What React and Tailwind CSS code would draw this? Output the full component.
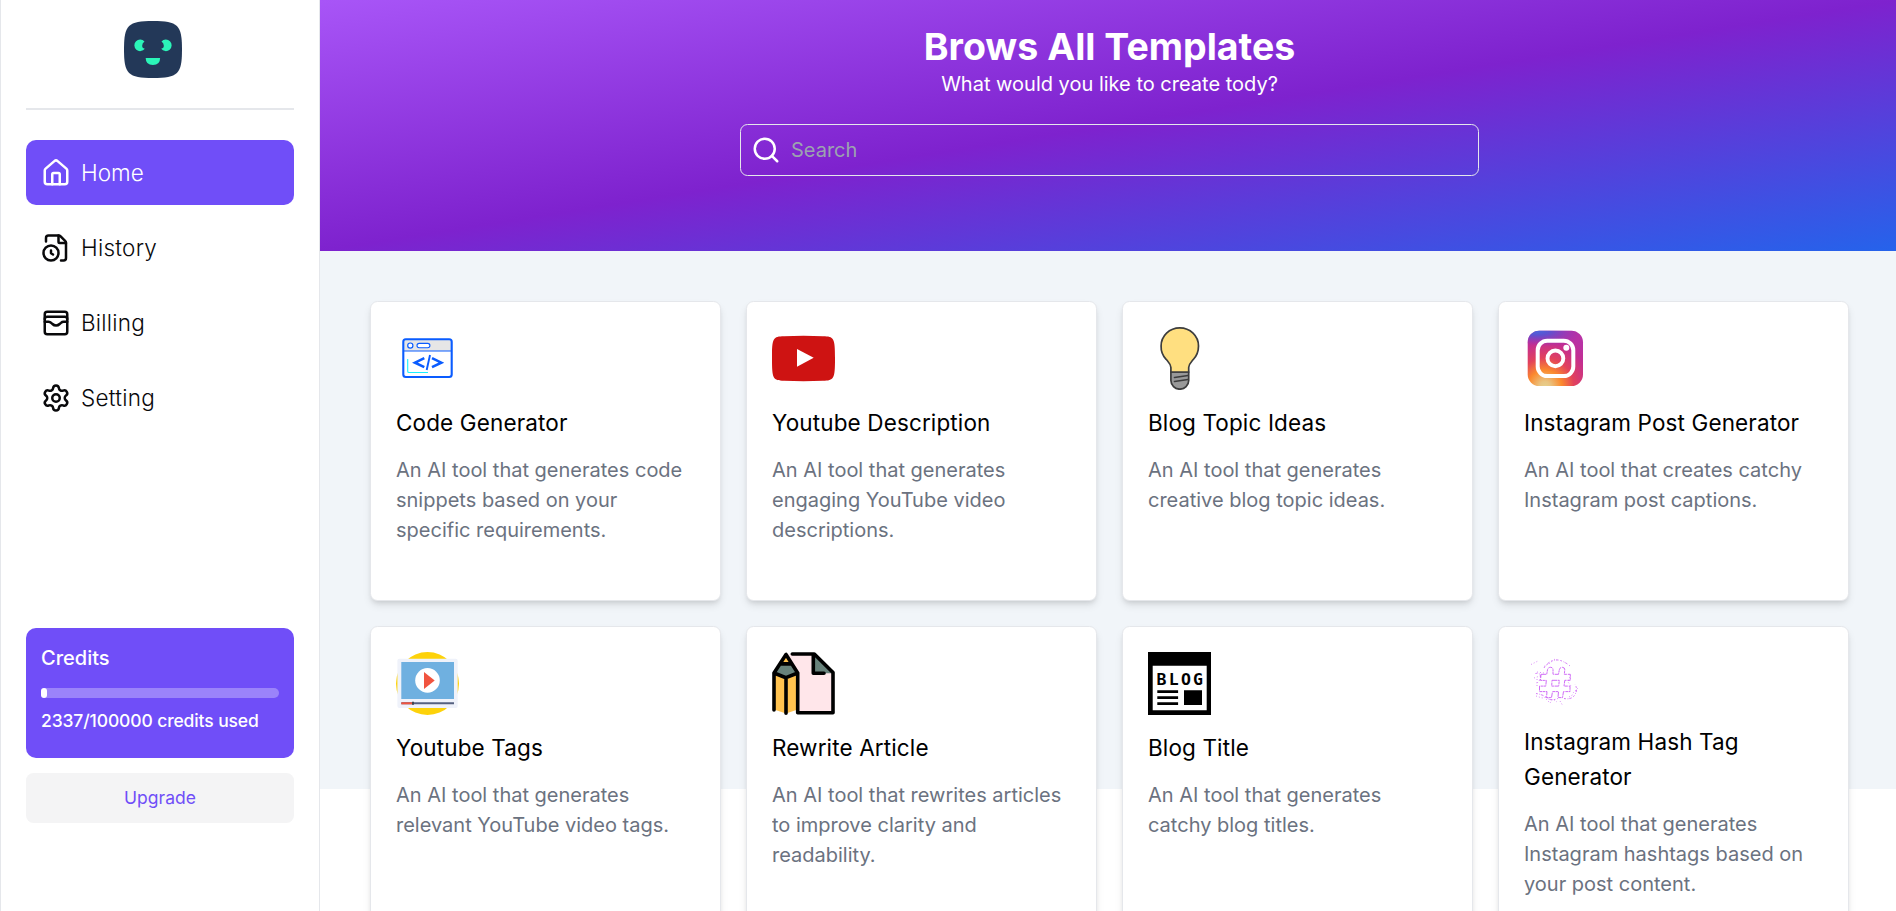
import React from "react";
import { House, FileClock, WalletCards, Settings, Search } from "lucide-react";

function CodeIcon() {
  return (
    <svg viewBox="0 0 63 63" className="size-[63px]" fill="none">
      <rect x="7.3" y="12.3" width="48.4" height="37.7" rx="2.5" fill="#fff" />
      <path d="M8 13h47v11H8z" fill="#e6e6e6" />
      <path d="M7.3 24h48.4" stroke="#0a5cff" strokeWidth="1.1" />
      <rect x="7.3" y="12.3" width="48.4" height="37.7" rx="2.5" stroke="#0a5cff" strokeWidth="2.1" />
      <circle cx="14.3" cy="18.6" r="2.6" fill="#fff" stroke="#0a5cff" strokeWidth="1.2" />
      <rect x="21" y="16.4" width="12.9" height="4.4" rx="2.2" fill="#fff" stroke="#0a5cff" strokeWidth="1.1" />
      <path d="M28.3 31.2l-9.3 4.5 9.3 4.5M36 31.2l9.3 4.5-9.3 4.5" stroke="#0a5cff" strokeWidth="2.6" />
      <path d="M34 28l-3.3 15" stroke="#0a5cff" strokeWidth="1.9" />
      <path d="M11.7 32v12.2q0 1.3 1.3 1.3h19" stroke="#1cf0ff" strokeWidth="1.1" />
    </svg>
  );
}

function YoutubeIcon() {
  return (
    <svg viewBox="0 0 63 63" className="size-[63px]">
      <path d="M0 31.5C0 11 1 9.300 12 9.200Q31.500 8.500 51 9.200C62 9.300 63 11 63 31.500S62 53.500 51 53.800Q31.500 54.500 12 53.800C1 53.500 0 52 0 31.500Z" fill="#ce1312" />
      <path d="M25 22l16.700 8.800L25 39.700z" fill="#fff" />
    </svg>
  );
}

function BulbIcon() {
  return (
    <svg viewBox="0 0 63 63" className="size-[63px]" stroke="#3d3d3d" strokeWidth="1.700" strokeLinejoin="round" strokeLinecap="round">
      <path d="M22.900 45h17.800v8.600a8.900 8.600 0 0 1-17.800 0z" fill="#999" />
      <path d="M22.900 45v-4.500c0-3.500-2-4.800-4.800-8.200A18.600 18.400 0 0 1 13.100 19a18.700 18.100 0 0 1 37.400 0c0 5.500-2 10-5 13.300-2.800 3.400-4.800 4.700-4.800 8.200V45z" fill="#ffdf80" />
      <path d="M26.500 50.500l13.500-2M26.500 54.500l13.500-2" fill="none" />
    </svg>
  );
}

function InstagramIcon() {
  return (
    <svg viewBox="0 0 63 63" className="size-[63px]">
      <defs>
        <radialGradient id="ig-warm" gradientUnits="userSpaceOnUse" cx="21" cy="60" r="56">
          <stop offset="0" stopColor="#e6d08c" />
          <stop offset=".1" stopColor="#e9c481" />
          <stop offset=".3" stopColor="#fb8a2e" />
          <stop offset=".52" stopColor="#e2425c" />
          <stop offset=".8" stopColor="#c32e92" />
          <stop offset="1" stopColor="#b832a5" />
        </radialGradient>
        <radialGradient id="ig-cool" gradientUnits="userSpaceOnUse" cx="0" cy="0" r="1" gradientTransform="translate(6 1) rotate(8) scale(50 17)">
          <stop offset="0" stopColor="#3a77e6" />
          <stop offset=".4" stopColor="#5d52d0" />
          <stop offset="1" stopColor="#8a35c0" stopOpacity="0" />
        </radialGradient>
      </defs>
      <rect x="3.700" y="3.700" width="55.300" height="55.300" rx="11.500" fill="url(#ig-warm)" />
      <rect x="3.700" y="3.700" width="55.300" height="55.300" rx="11.500" fill="url(#ig-cool)" />
      <rect x="13.700" y="13.700" width="35.600" height="35.400" rx="9.500" fill="none" stroke="#fff" strokeWidth="4" />
      <circle cx="31.400" cy="31.400" r="7.900" fill="none" stroke="#fff" strokeWidth="3.900" />
      <circle cx="42.300" cy="20.700" r="3" fill="#fff" />
    </svg>
  );
}

function VideoTagsIcon() {
  return (
    <svg viewBox="0 0 63 63" className="size-[63px]">
      <circle cx="31.500" cy="31.500" r="31.500" fill="#fdd20a" />
      <rect x="1.400" y="6.700" width="60.300" height="49.300" rx="2" fill="#eff2fa" />
      <path d="M5.300 10H58v37H5.300z" fill="#6fb0e0" />
      <circle cx="31.500" cy="28.400" r="12.300" fill="#fff" />
      <path d="M28 20l10.700 8.400L28 37z" fill="#f1543f" />
      <path d="M5.300 51.300H58" stroke="#556080" strokeWidth="2" />
      <path d="M5.300 51.300H17" stroke="#f1543f" strokeWidth="2" />
      <path d="M17 49.800v3" stroke="#40474f" strokeWidth="2" />
    </svg>
  );
}

function RewriteIcon() {
  return (
    <svg viewBox="0 0 63 63" className="size-[63px]" fill="none" strokeLinecap="round" strokeLinejoin="round">
      <path d="M16 2h27l18 18.500V61H25.700V21z" fill="#ffe6ea" />
      <path d="M42 3l19 18.300H42z" fill="#68827b" />
      <path d="M2 21l12 4.500L25.700 21v36.500L14 61.500 2 57.500z" fill="#ffc24f" />
      <path d="M14 2L2 21l12 4.500L25.700 21z" fill="#68827b" />
      <path d="M14 2L8.500 11.500h11z" fill="#ffc24f" />
      <g stroke="#000" strokeWidth="3.600">
        <path d="M20.300 2H42.300L61 20.500v40.200H25.700V21L14 2.500 2 21v37M2 21l12 4.700L25.700 21M14 25.700v35.500M9.500 11.900h9M41.300 2v19.300H52" />
      </g>
    </svg>
  );
}

function BlogIcon() {
  return (
    <svg viewBox="0 0 63 63" className="size-[63px]">
      <path d="M0 0h63v63H0z" />
      <path d="M4.700 13.700h54v44.600h-54z" fill="#fff" />
      <text x="8.500" y="33.200" textLength="46.500" fontSize="16.500" fontWeight="700" fontFamily="DejaVu Sans Mono, monospace">BLOG</text>
      <path d="M9.300 38.200h20.800v2.700H9.300zM9.300 44.200h20.800v2.700H9.300zM9.300 50.200h20.800v2.700H9.300zM36 38.200h18V53H36z" />
    </svg>
  );
}

function HashIcon() {
  return (
    <svg viewBox="0 0 57 57" className="size-[57px]" fill="none" stroke="#cb5cf5" strokeWidth=".9">
      <path strokeDasharray="5 .6 2.300 .5 3 .9" d="M17 22.300h5.700l.8-4.500q.5-2.500 3-2.500t2.500 2.500v4.500h5.500l.8-4.500q.5-2.500 3-2.500t2.500 2.500l-.5 4.500h6v6h-5.500l-.8 5.800h6v5.500h-6.500l-1 6h-4.500l.5-6h-6l-1 6h-5l.5-6h-7.500v-5.500h6.300l.5-5.700h-5.800zM28 28.300h7.300l-.6 5.800h-7z" />
      <path strokeDasharray="1.600 1.700 .8 1.100 2.500 2" d="M20 16q4-6 9-7.500t10 1 7 4.500M11.500 21.500q5-1 5 3t-4 7M12 41.500q7 1 11 4.500t12 0M40 46.500q8 1.500 11-4t0-10" />
      <path strokeDasharray="1 2" opacity=".8" d="M7 12.500l7-3.500M20 14.500l6-3.500 5-4M13 20l7 1M10 26l6-2M13 34v-8M46 25l-2 5 3 4M54 36l-5 5M12 44l6 2 5-1M22 47l4 4 3-4 4 3M36 49l3 5M45 45l5-3" />
    </svg>
  );
}

function Logo() {
  return (
    <svg viewBox="0 0 58 57" className="h-[57px] w-[58px]">
      <path d="M0 28.500C0 4 4 0 29 0s29 4 29 28.500S54 57 29 57 0 53 0 28.500Z" fill="#233858" />
      <path d="M20.500 20.500a5.800 5.800 0 1 0 .3 7.300q-2.800-.6-2.600-3.300.1-2.600 2.300-4zM37.500 20.500a5.800 5.800 0 1 1-.3 7.300q2.800-.6 2.600-3.300-.1-2.600-2.300-4z" fill="#2bf5b8" />
      <path d="M21.700 37h14.400q0 7-7.200 7t-7.200-7z" fill="#2bf5b8" />
    </svg>
  );
}

const templates = [
  { name: "Code Generator", desc: "An AI tool that generates code snippets based on your specific requirements.", icon: CodeIcon },
  { name: "Youtube Description", desc: "An AI tool that generates engaging YouTube video descriptions.", icon: YoutubeIcon },
  { name: "Blog Topic Ideas", desc: "An AI tool that generates creative blog topic ideas.", icon: BulbIcon },
  { name: "Instagram Post Generator", desc: "An AI tool that creates catchy Instagram post captions.", icon: InstagramIcon },
  { name: "Youtube Tags", desc: "An AI tool that generates relevant YouTube video tags.", icon: VideoTagsIcon },
  { name: "Rewrite Article", desc: "An AI tool that rewrites articles to improve clarity and readability.", icon: RewriteIcon },
  { name: "Blog Title", desc: "An AI tool that generates catchy blog titles.", icon: BlogIcon },
  { name: "Instagram Hash Tag Generator", desc: "An AI tool that generates Instagram hashtags based on your post content.", icon: HashIcon },
];

const menu = [
  { name: "Home", icon: House, active: true },
  { name: "History", icon: FileClock },
  { name: "Billing", icon: WalletCards },
  { name: "Setting", icon: Settings },
];

function Sidebar() {
  return (
    <aside className="flex h-full w-80 shrink-0 flex-col border-x border-gray-200 bg-white px-[25px] pt-[21px]">
      <div className="flex justify-center pr-[14px]">
        <Logo />
      </div>
      <hr className="mt-[30px] border-t-2 border-gray-200" />
      <nav className="mt-[30px] flex flex-col gap-[10px]">
        {menu.map(({ name, icon: Icon, active }) => (
          <a
            key={name}
            className={
              active
                ? "flex items-center gap-[10px] rounded-[10px] bg-[#704ef8] p-[15px] text-white"
                : "flex items-center gap-[10px] rounded-[10px] p-[15px] text-[#09090b]"
            }
          >
            <Icon size={30} />
            <span className={active ? "text-[22.5px] leading-[35px] font-[350]" : "text-[22.5px] leading-[35px] font-light tracking-[0.25px]"}>{name}</span>
          </a>
        ))}
      </nav>
      <div className="mt-[198px] h-[130px] rounded-[10px] bg-[#704ef8] p-[15px] text-white">
        <h2 className="text-[20px] leading-[30px] font-medium">Credits</h2>
        <div className="mt-[15px] h-[10px] rounded-full bg-[#9b83fa]">
          <div className="h-full w-[6px] rounded-full bg-white" />
        </div>
        <p className="mt-[10px] text-[17.5px] leading-[25px] font-medium tracking-[-0.12px]">2337/100000 credits used</p>
      </div>
      <button className="mt-[15px] h-[50px] rounded-[7.5px] bg-[#f4f4f5] text-[17.5px] text-[#704ef8]">Upgrade</button>
    </aside>
  );
}

export default function App() {
  return (
    <div className="flex h-[911px] overflow-hidden bg-white font-['Inter',sans-serif]">
      <Sidebar />
      <main className="h-[789px] w-[1579px] shrink-0 bg-slate-100">
        <header className="flex h-[251px] flex-col items-center bg-[linear-gradient(to_bottom_right,#a855f7,#7e22ce,#2563eb)] pt-[24px] text-white">
          <h1 className="text-[37.5px] leading-[45px] font-bold">Brows All Templates</h1>
          <p className="text-[20px] leading-[30px]">What would you like to create tody?</p>
          <div className="mt-[25px] flex h-[52px] w-[739px] items-center gap-[10px] rounded-[7.5px] border border-gray-200 px-[10px]">
            <Search size={30} />
            <input placeholder="Search" className="flex-1 bg-transparent text-[20px] outline-none placeholder:text-[#9ca3af]" />
          </div>
        </header>
        <section className="grid auto-rows-[300px] grid-cols-4 gap-[25px] p-[50px]">
          {templates.map(({ name, desc, icon: Icon }) => (
            <article key={name} className="flex flex-col gap-[15px] rounded-[7.5px] border border-gray-200 bg-white p-[25px] shadow-[0_5px_8px_-1px_rgb(0_0_0/0.1),0_3px_5px_-2px_rgb(0_0_0/0.1)]">
              <Icon />
              <h2 className="text-[22.5px] leading-[35px] tracking-[0.13px] text-black">{name}</h2>
              <p className="line-clamp-3 text-[20px] leading-[30px] text-[#6b7280]">{desc}</p>
            </article>
          ))}
        </section>
      </main>
    </div>
  );
}
